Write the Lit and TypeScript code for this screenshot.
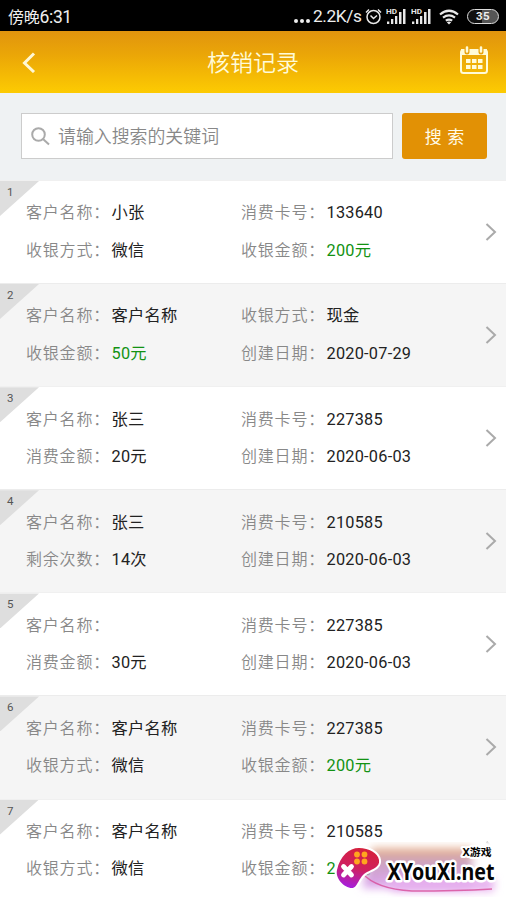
import { LitElement, html, css } from "lit";
import { customElement } from "lit/decorators.js";

type Field = { label: string; value: string; money?: boolean };

const f = (label: string, value: string, money = false): Field => ({ label, value, money });

const records: Field[][] = [
  [f("客户名称", "小张"), f("消费卡号", "133640"), f("收银方式", "微信"), f("收银金额", "200元", true)],
  [f("客户名称", "客户名称"), f("收银方式", "现金"), f("收银金额", "50元", true), f("创建日期", "2020-07-29")],
  [f("客户名称", "张三"), f("消费卡号", "227385"), f("消费金额", "20元"), f("创建日期", "2020-06-03")],
  [f("客户名称", "张三"), f("消费卡号", "210585"), f("剩余次数", "14次"), f("创建日期", "2020-06-03")],
  [f("客户名称", ""), f("消费卡号", "227385"), f("消费金额", "30元"), f("创建日期", "2020-06-03")],
  [f("客户名称", "客户名称"), f("消费卡号", "227385"), f("收银方式", "微信"), f("收银金额", "200元", true)],
  [f("客户名称", "客户名称"), f("消费卡号", "210585"), f("收银方式", "微信"), f("收银金额", "200元", true)],
];

@customElement("status-bar")
class StatusBar extends LitElement {
  static styles = css`
    :host {
      display: flex;
      align-items: center;
      height: 31px;
      box-sizing: border-box;
      padding: 1px 7px 0 8px;
      background: #000;
      color: #eee;
      font-size: 16px;
    }
    .time { flex: 1; letter-spacing: -0.2px; }
    .time b { font-weight: 400; font-size: 17.5px; letter-spacing: -0.4px; }
    .dots { display: flex; gap: 2px; margin: 9px 3px 0 0; }
    .dots i { width: 4px; height: 4px; border-radius: 2px; background: #eee; }
    .speed { font-size: 17.3px; width: 52px; white-space: nowrap; letter-spacing: -0.4px; }
    .icon { display: block; flex: none; }
    .hd { font-size: 7px; font-weight: 700; }
    .battery {
      display: flex;
      align-items: center;
      justify-content: center;
      box-sizing: border-box;
      width: 32px;
      height: 15px;
      border: 1.5px solid #ddd;
      border-radius: 8px;
      background: linear-gradient(90deg, #111 0 45%, #555 46%);
      font-size: 11.5px;
      font-weight: 700;
      letter-spacing: 0.3px;
    }
  `;
  signal() {
    return html`<svg class="icon" width="25" height="17" viewBox="0 0 25 17" fill="#e8e8e8">
      <text class="hd" x="0" y="6" textLength="11" lengthAdjust="spacingAndGlyphs">HD</text>
      <path d="M1 13.500h2.300V16H1zM5 11h2.300v5H5zM9 8h2.300v8H9zM13 4h2.500v12H13zM17 1h2.500v15H17z"/>
    </svg>`;
  }
  render() {
    return html`
      <span class="time">傍晚<b>6:31</b></span>
      <span class="dots"><i></i><i></i><i></i></span>
      <span class="speed">2.2K/s</span>
      <svg class="icon" width="21" height="17" viewBox="0 0 21 17" fill="none" stroke="#e8e8e8" stroke-width="1.500">
        <circle cx="8.500" cy="9" r="6.500"/><path d="M5.500 7.500 8.500 10.500 12 7.500M1 4.500 4 1.500M13 1.500l3 3"/>
      </svg>
      ${this.signal()}${this.signal()}
      <svg class="icon" width="31" height="17" viewBox="0 0 31 17" fill="none" stroke="#e8e8e8" stroke-width="2.200">
        <path d="M4 6.500Q13-1 22 6.500M7 9.700q6-4.500 12 0M9.800 12.700q3.200-2.200 6.400 0"/>
        <path d="m10.800 14.300 2.200 2.200 2.200-2.200q-2.200-1.500-4.400 0Z" fill="#e8e8e8" stroke="none"/>
      </svg>
      <span class="battery">35</span>`;
  }
}

@customElement("record-row")
class RecordRow extends LitElement {
  static properties = { index: { type: Number }, fields: { attribute: false } };
  declare index: number;
  declare fields: Field[];
  static styles = css`
    :host {
      display: flex;
      position: relative;
      box-sizing: border-box;
      height: 103.1px;
      padding: 14.4px 8px 0 26px;
      background: #fff;
      border-top: 1px solid #f0f0f0;
    }
    :host(.alt) { background: #f5f5f5; border-top-color: #ececec; }
    .corner {
      position: absolute;
      left: 0;
      top: 0;
      width: 39px;
      height: 35px;
      background: #dedede;
      clip-path: polygon(0 0, 100% 0, 0 100%);
    }
    .number { position: absolute; left: 7px; top: 4px; font-size: 11.5px; line-height: 15px; color: #555; }
    .grid {
      display: grid;
      grid-template-columns: 215px 1fr;
      grid-auto-rows: 37.5px;
      flex: 1;
    }
    .field { display: flex; line-height: 36px; white-space: nowrap; }
    .label { width: 85.5px; font-size: 16px; letter-spacing: 0.8px; color: #888; font-weight: 350; }
    .value { font-size: 16.3px; letter-spacing: 0.25px; color: #222; }
    .money { color: #129212; }
    .arrow { align-self: flex-start; margin-top: 26.3px; }
  `;
  render() {
    return html`
      <i class="corner"></i><span class="number">${this.index}</span>
      <div class="grid">
        ${this.fields.map(
          (x) => html`<div class="field">
            <span class="label">${x.label}：</span><span class="value ${x.money ? "money" : ""}">${x.value}</span>
          </div>`
        )}
      </div>
      <svg class="arrow" width="14" height="20" viewBox="0 0 14 20" fill="none" stroke="#aaa" stroke-width="2">
        <path d="m2.500 2 8.500 8-8.500 8"/>
      </svg>`;
  }
}

@customElement("site-badge")
class SiteBadge extends LitElement {
  static styles = css`
    :host { display: block; width: 174px; height: 58px; }
    .art { display: block; overflow: hidden; }
    .name { font: 700 24px "Noto Sans", "Open Sans", sans-serif; }
    .tag { font: 700 10.5px "Noto Sans", "Noto Sans CJK SC", sans-serif; }
    .outlined { paint-order: stroke; stroke: #fff; stroke-width: 4px; stroke-linejoin: round; fill: #050505; }
    .name.outlined { stroke-width: 5px; }
  `;
  render() {
    return html`<svg class="art" width="174" height="58" viewBox="0 0 174 58">
      <defs>
        <linearGradient id="pad" x1=".6" y1="0" x2=".3" y2="1">
          <stop offset="0" stop-color="#d5213c"/><stop offset=".5" stop-color="#cf1f60"/><stop offset="1" stop-color="#a51fe0"/>
        </linearGradient>
        <linearGradient id="glow" x1="0" y1="0" x2="0" y2="1">
          <stop offset="0" stop-color="#e8b084"/><stop offset=".35" stop-color="#cba3c0"/><stop offset="1" stop-color="#dca6f0"/>
        </linearGradient>
        <filter id="soft" x="-20%" y="-40%" width="140%" height="180%"><feGaussianBlur stdDeviation="4"/></filter>
        <filter id="fade" x="-40%" y="-40%" width="180%" height="180%"><feGaussianBlur stdDeviation="1.500"/></filter>
      </defs>
      <rect x="147" y="0" width="22" height="22" fill="#fff" filter="url(#fade)"/>
      <path d="M40 6H140V46H30Z" fill="url(#glow)" filter="url(#soft)"/>
      <path d="M50 36h112v13h-100z" fill="#e6aeee" filter="url(#soft)"/>
      <path d="M30 31q14 16 50 18 45 0 80-2" fill="none" stroke="#d74b98" stroke-width="1.300" opacity=".8"/>
      <path d="M5 28C8 14 17 6 27 6c10 0 19 5 20 12 1 7-6 9-12 12-9 5-9 16-15 16C12 46 3 36 5 28Z" fill="url(#pad)" stroke="#fff" stroke-width="4" paint-order="stroke"/>
      <g fill="#ffa51e"><circle cx="25" cy="12.500" r="2.900"/><circle cx="32.500" cy="12.500" r="2.900"/><circle cx="25" cy="19.500" r="2.900"/><circle cx="32.500" cy="19.500" r="2.900"/></g>
      <path d="m11.500 24.500 8 8.500m0-8.500-8 8.500" stroke="#fff" stroke-width="4.800" stroke-linecap="round"/>
      <text class="name outlined" x="55.500" y="38" textLength="107" lengthAdjust="spacingAndGlyphs">XYouXi.net</text>
      <text class="tag outlined" x="130.500" y="14" textLength="29" lengthAdjust="spacingAndGlyphs">X游戏</text>
    </svg>`;
  }
}

@customElement("app-root")
class AppRoot extends LitElement {
  static styles = css`
    :host {
      display: block;
      position: relative;
      width: 506px;
      height: 900px;
      overflow: hidden;
      background: #fff;
      font-family: Roboto, "Noto Sans CJK SC", sans-serif;
    }
    .header {
      display: flex;
      align-items: center;
      justify-content: space-between;
      box-sizing: border-box;
      height: 62px;
      padding: 0 17px 0 21px;
      background: linear-gradient(#e1940e, #eba707 40%, #fdcb02);
      color: #fffbd8;
    }
    .title { font-size: 23px; font-weight: 350; width: 93px; white-space: nowrap; margin: 0 0 3px 11px; }
    .search {
      display: flex;
      gap: 9px;
      box-sizing: border-box;
      height: 87px;
      padding: 20px 19px 20px 21px;
      background: #eff2f3;
    }
    .box {
      display: flex;
      align-items: center;
      gap: 8px;
      flex: 1;
      box-sizing: border-box;
      height: 46px;
      padding-left: 9px;
      border: 1px solid #ccc;
      background: #fff;
      color: #888;
      font-size: 17.9px;
      font-weight: 350;
    }
    .hint { margin-bottom: 2px; }
    .button {
      display: flex;
      align-items: center;
      justify-content: center;
      box-sizing: border-box;
      width: 85px;
      height: 46px;
      padding-bottom: 2px;
      border-radius: 3px;
      background: #e29105;
      color: #fffbe8;
      font-size: 17px;
      word-spacing: 1.5px;
    }
    .badge { position: absolute; left: 332px; top: 842px; }
  `;
  render() {
    return html`
      <status-bar></status-bar>
      <header class="header">
        <svg width="16" height="22" viewBox="0 0 16 22" fill="none" stroke="#fff8d5" stroke-width="3">
          <path d="M13 2.500 3.500 12 13 21"/>
        </svg>
        <span class="title">核销记录</span>
        <svg width="30" height="32" viewBox="0 0 30 32" fill="none">
          <rect x="2" y="4" width="26" height="23" rx="2.500" stroke="#fffbd8" stroke-width="2"/>
          <path d="M2 3h26v6H2z" fill="#fffbd8"/>
          <path d="M8 1v5M22 1v5" stroke="#e9a30c" stroke-width="5" stroke-linecap="round"/>
          <path d="M8 1.500v4M22 1.500v4" stroke="#fffbd8" stroke-width="2.500" stroke-linecap="round"/>
          <path d="M7 13h4.500v4H7zM13 13h4.500v4H13zM19 13h4.500v4H19zM7 19h4.500v4H7zM13 19h4.500v4H13zM19 19h4.500v4H19z" fill="#fffbd8"/>
        </svg>
      </header>
      <div class="search">
        <div class="box">
          <svg width="19" height="19" viewBox="0 0 19 19" fill="none" stroke="#aaa" stroke-width="2">
            <circle cx="7.500" cy="7.500" r="6.300"/><path d="m12 12 6 5.500"/>
          </svg>
          <span class="hint">请输入搜索的关键词</span>
        </div>
        <div class="button">搜 索</div>
      </div>
      ${records.map(
        (r, i) => html`<record-row class=${i % 2 ? "alt" : ""} .index=${i + 1} .fields=${r}></record-row>`
      )}
      <site-badge class="badge"></site-badge>`;
  }
}
